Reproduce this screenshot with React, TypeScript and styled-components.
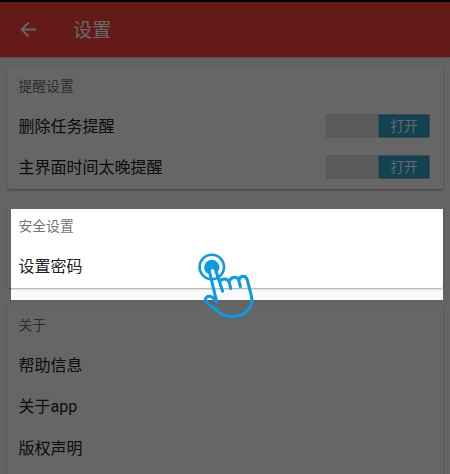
import React from 'react';
import styled, { createGlobalStyle } from 'styled-components';

const GlobalStyle = createGlobalStyle`
  * { box-sizing: border-box; }
  body { margin: 0; background: #646464; overflow: hidden; }
`;

const Screen = styled.div`
  position: relative;
  display: flex;
  flex-direction: column;
  width: 450px;
  height: 474px;
  overflow: hidden;
  background: #f9f9f9;
  color: #212121;
  font-family: Roboto, "Noto Sans CJK SC", sans-serif;
`;

const StatusBar = styled.div`
  flex: none;
  height: 2px;
  background: #000;
`;

const AppBar = styled.header`
  flex: none;
  display: flex;
  align-items: center;
  gap: 36px;
  height: 55px;
  padding-left: 20px;
  background: #f9443a;
  color: #fff;
  box-shadow: 0 1px 2px rgba(0, 0, 0, 0.2);
`;

const Title = styled.h1`
  margin: 2px 0 0;
  font-size: 19.2px;
  line-height: 28px;
  font-weight: 400;
`;

const Content = styled.main`
  display: flex;
  flex-direction: column;
  gap: 17px;
  padding: 9px 7px 0;
`;

const Card = styled.section<{ $height: number }>`
  flex: none;
  height: ${(p) => p.$height}px;
  padding: 10px 12px 0 11.5px;
  border-radius: 2px;
  background: #fff;
  box-shadow: 0 1px 2px rgba(0, 0, 0, 0.34);
`;

const SectionTitle = styled.h2`
  margin: 0 0 10px;
  color: #757575;
  font-size: 13.8px;
  line-height: 20px;
  font-weight: 400;
`;

const Row = styled.div`
  display: flex;
  align-items: center;
  justify-content: space-between;
  height: 41.5px;
  font-size: 16px;
  line-height: 24px;
`;

const Switch = styled.span`
  display: flex;
  justify-content: flex-end;
  width: 104px;
  height: 24px;
  margin: 0 1px 2px 0;
  padding: 1px;
  background: #e2e2e2;
`;

const Thumb = styled.span`
  display: flex;
  align-items: center;
  justify-content: center;
  width: 50px;
  height: 22px;
  border-radius: 1px;
  background: #2ba9d0;
  box-shadow: 0 0 0 1px #a9bcc3, inset 0 0 0 1px #2499bf;
  color: #fff;
  font-size: 13.6px;
  line-height: 20px;
`;

const Spotlight = styled.div`
  position: absolute;
  left: 11px;
  top: 209px;
  width: 432px;
  height: 91px;
  box-shadow: 0 0 0 600px rgba(0, 0, 0, 0.6);
`;

const Pointer = styled.svg`
  position: absolute;
  left: 180px;
  top: 240px;
`;

const toggles = ['删除任务提醒', '主界面时间太晚提醒'];
const links = ['帮助信息', '关于app', '版权声明'];

export default function App() {
  return (
    <Screen>
      <GlobalStyle />
      <StatusBar />
      <AppBar>
        <svg width="17" height="17" viewBox="0 0 17 17" fill="none" stroke="currentColor" strokeWidth="1.8">
          <path d="M16 8.5H2M8.7 1.4L1.6 8.5l7.1 7.1" />
        </svg>
        <Title>设置</Title>
      </AppBar>
      <Content>
        <Card $height={123}>
          <SectionTitle>提醒设置</SectionTitle>
          {toggles.map((label) => (
            <Row key={label}>
              {label}
              <Switch>
                <Thumb>打开</Thumb>
              </Switch>
            </Row>
          ))}
        </Card>
        <Card $height={82}>
          <SectionTitle>安全设置</SectionTitle>
          <Row>设置密码</Row>
        </Card>
        <Card $height={180}>
          <SectionTitle>关于</SectionTitle>
          {links.map((label) => (
            <Row key={label}>{label}</Row>
          ))}
        </Card>
      </Content>
      <Spotlight />
      <Pointer width="90" height="90" viewBox="0 0 90 90" fill="none" stroke="#0c9ae6" strokeLinecap="round" strokeLinejoin="round">
        <circle cx="31.8" cy="27" r="12.2" strokeWidth="2.6" />
        <path
          d="M24.4 29.5a7.7 7.7 0 1 1 14.9-.2l-2.2 3.2-1.7-4.7q-3.3-3.4-6.3.8l.6 5.7q-4.3-1.4-5.3-4.8z"
          fill="#0c9ae6"
          stroke="none"
        />
        <path
          d="M36.7 61.8L29.4 31.3c-.8-4 5.2-5.3 6.2-1.3L42.6 51.2M39.7 42.4c1.2-4.4 8.2-4.6 9.5.3l1.6 5.8M49.3 41.7c.7-5.3 8.1-5.9 9.6-.9l1.5 5.8M59 40.3c.8-5.1 7-5.3 8.3-.3l3.9 15.2c3.3 13.5-7.6 21.2-18.5 21.1-9 .1-12.3-2.4-17.4-7.1-2.8-2.5-5.6-3.1-8.2-6.6-4.6-4.4 1.2-7.9 5.1-5.4 2.1 1.3 3.5 3 4.7 4.8"
          strokeWidth="3"
        />
      </Pointer>
    </Screen>
  );
}
